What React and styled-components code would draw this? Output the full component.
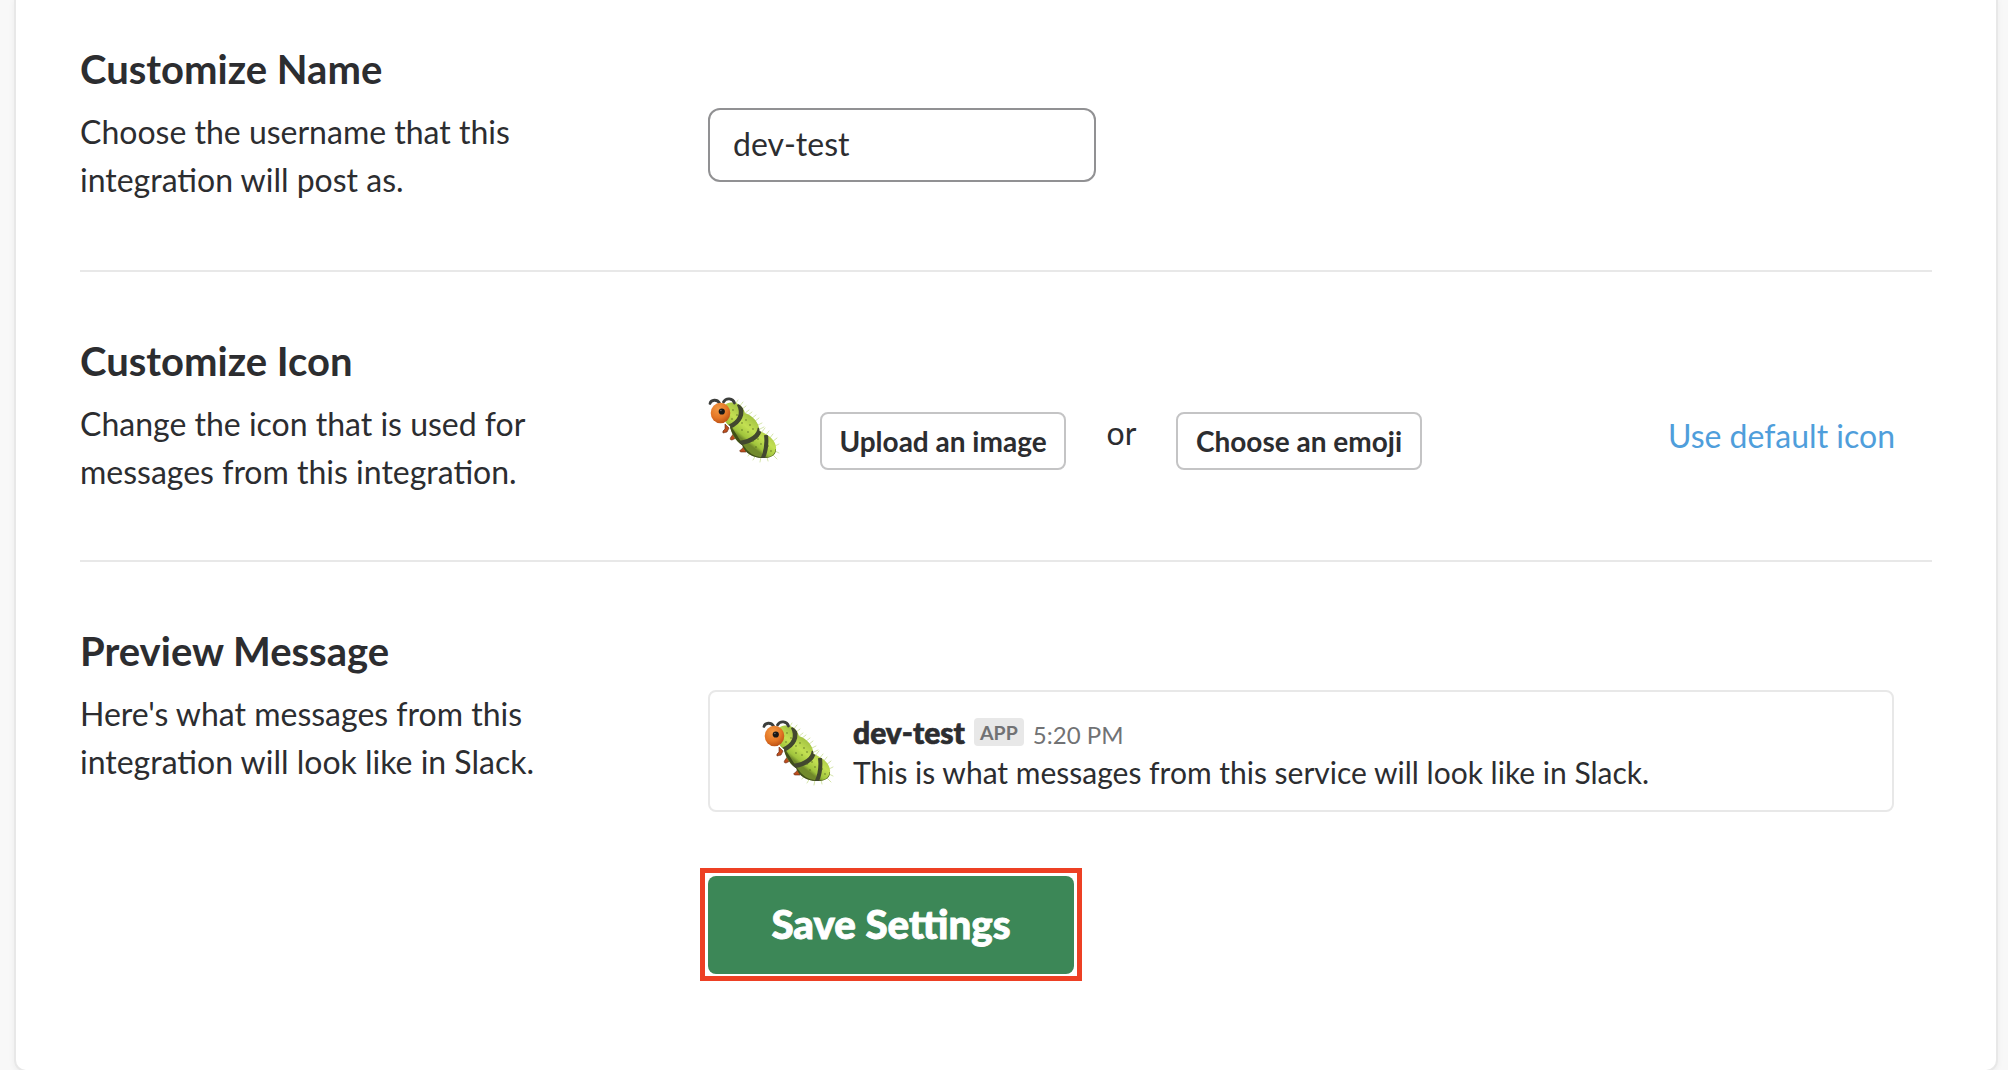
import React from "react";
import styled, { createGlobalStyle } from "styled-components";

const Global = createGlobalStyle`
  * { box-sizing: border-box; }
  body { margin: 0; background: #f8f8f8; font-family: Lato, sans-serif; color: #2c2d30; }
`;
const Page = styled.div`height: 1070px; overflow: hidden; padding: 0 12px 0 16px;`;
const Card = styled.main`
  height: 1070px; padding: 0 64px; background: #fff; border-radius: 0 0 10px 10px;
  box-shadow: 0 0 0 2px #e8e8e8, 0 2px 6px 2px rgba(0, 0, 0, 0.05);
`;
const Section = styled.section`
  display: flex; align-items: flex-start; height: ${(p) => p.$h}px; padding-top: ${(p) => p.$top}px;
  border-bottom: ${(p) => (p.$last ? "0" : "2px solid #e8e8e8")};
`;
const Intro = styled.div`width: 628px; flex: none;`;
const Title = styled.h2`margin: 0 0 14px; font-size: 40px; line-height: 50px; font-weight: 700;`;
const Text = styled.p`margin: 0; width: 480px; font-size: 32px; line-height: 48px;`;
const Controls = styled.div`display: flex; flex: 1; align-items: flex-start; padding: ${(p) => p.$top}px 38px 0 0;`;
const Input = styled.input`
  width: 388px; height: 74px; border: 2px solid #919193; border-radius: 12px; padding: 0 23px 4px;
  font: 400 32px Lato, sans-serif; color: #2c2d30; outline: 0;
`;
const Choices = styled.div`display: flex; align-items: flex-start; padding: 17px 0 0 40px;`;
const Button = styled.button`
  width: 246px; height: 58px; margin: 0; padding: 0; border: 2px solid #c4c4c5; border-radius: 8px;
  background: #fff; font: 700 28px Lato, sans-serif; color: #2c2d30; white-space: nowrap;
`;
const Or = styled.span`width: 110px; padding-left: 1px; text-align: center; font-size: 32px; line-height: 42px;`;
const Link = styled.a`margin: 16px -1px 0 auto; font-size: 32px; line-height: 50px; color: #4f9edb;`;
const Column = styled.div`flex: 1; padding: 64px 38px 0 0;`;
const Message = styled.div`
  display: flex; height: 122px; padding: 21px 0 0 52px; border: 2px solid #e8e8e8; border-radius: 8px;
`;
const Avatar = styled.div`padding-top: 5px;`;
const Body = styled.div`padding-left: 19px;`;
const Meta = styled.div`display: flex; align-items: baseline; height: 37px; line-height: 38px;`;
const Name = styled.span`font-size: 30px; font-weight: 900; -webkit-text-stroke: 0.7px currentColor;`;
const Badge = styled.span`
  align-self: flex-start; width: 50px; height: 28px; margin: 5px 9px 0; border-radius: 4px;
  background: #e8e8e8; color: #717274; font-size: 19.5px; line-height: 29px; font-weight: 700; text-align: center;
`;
const Time = styled.span`font-size: 24px; color: #717274;`;
const Line = styled.div`font-size: 30px; line-height: 44px; white-space: nowrap;`;
const Highlight = styled.div`width: 382px; height: 113px; margin: 56px 0 0 -8px; border: 5px solid #ed4024; padding: 3px;`;
const Save = styled.button`
  width: 366px; height: 98px; border: 0; border-radius: 8px; padding: 0 0 4px; background: #3c8757;
  color: #fff; font: 900 40.3px Lato, sans-serif; -webkit-text-stroke: 0.9px currentColor;
`;
const BugSvg = styled.svg`display: block; flex: none; width: 72px; height: 72px; overflow: visible;`;

const BODY = "M18 9 C27 5 35 10 37 18 C45 21 51 27 51.5 36 C59 39 67 44 68 52 C69 60 63 63.5 54 63 C45 63 37 58 34 50 C27 46 23 38 22 31 C15 28 12 14 18 9Z";
const SPINES = [
  [27, 10, 30, 5], [31, 12, 35, 7], [33, 15, 38, 11], [36, 19, 41, 15], [39, 21, 44, 17], [43, 24, 48, 20],
  [46, 27, 51, 23], [48, 31, 54, 28], [50, 35, 56, 32], [53, 38, 57, 33], [57, 41, 61, 36], [61, 44, 65, 39],
  [64, 47, 69, 43], [67, 51, 71, 49], [67, 56, 71, 58], [65, 60, 69, 64], [59, 62, 60, 66], [53, 62, 52, 67],
  [48, 60, 45, 65], [43, 57, 40, 61],
];
const DOTS = [[25, 15], [29, 20], [24, 24], [34, 28], [38, 25], [42, 30], [34, 35], [40, 37], [45, 34], [45, 46], [50, 44], [48, 52], [53, 49], [60, 51], [63, 56]];

function Bug({ id }) {
  const skin = `skin-${id}`;
  const face = `face-${id}`;
  const clip = `clip-${id}`;
  return (
    <BugSvg viewBox="0 0 72 72">
      <defs>
        <linearGradient id={skin} gradientUnits="userSpaceOnUse" x1="47" y1="25" x2="33" y2="43">
          <stop offset="0" stopColor="#a6c544" />
          <stop offset="0.45" stopColor="#c3e052" />
          <stop offset="0.85" stopColor="#a0c43c" />
          <stop offset="1" stopColor="#718a2b" />
        </linearGradient>
        <radialGradient id={face} cx="0.4" cy="0.3" r="0.75">
          <stop offset="0" stopColor="#f39a45" />
          <stop offset="0.6" stopColor="#e47625" />
          <stop offset="1" stopColor="#b84d14" />
        </radialGradient>
        <clipPath id={clip}><path d={BODY} /></clipPath>
      </defs>
      <g fill="#bd4d1d" stroke="#632a12" strokeWidth="0.6">
        <path d="M17 29 L21 33 L19 37 L15 38 Q14 36 17 34Z" />
        <path d="M26 38 L28 43 L24 45 Q21 45 23 42Z" />
        <path d="M36 51 L38 57 L33 57 Q30 56 34 54Z" />
      </g>
      <g stroke="#c3da86" strokeWidth="0.7" strokeLinecap="round">
        {SPINES.map(([a, b, c, d]) => <line key={`${a}-${b}`} x1={a} y1={b} x2={c} y2={d} />)}
      </g>
      <path d={BODY} fill={`url(#${skin})`} />
      <g clipPath={`url(#${clip})`} fill="none">
        <path d="M22 32 C27 40 31 46 34 51 C39 59 47 63.5 54 64 C62 65 69 61 69 54" stroke="#26300f" strokeWidth="3" opacity="0.65" />
        <g stroke="#42472f" strokeWidth="4.6">
          <path d="M31 9 C36 19 32 27 21 32" />
          <path d="M52 33 C51 41 44 46 32 48" />
          <path d="M58 40 C59 48 59 55 54 65" strokeWidth="4" />
        </g>
      </g>
      <g fill="#4f631d">
        {DOTS.map(([x, y]) => <circle key={`${x}-${y}`} cx={x} cy={y} r="0.65" />)}
      </g>
      <g fill="none" stroke="#3c3e3c" strokeWidth="2.8" strokeLinecap="round">
        <path d="M2 8.5 C3 4.5 9 4 11.5 8" />
        <path d="M15.5 7 C18 2.5 25 3 26.5 8" />
      </g>
      <ellipse cx="12.5" cy="18" rx="9.8" ry="10.3" fill={`url(#${face})`} />
      <circle cx="13.8" cy="16.5" r="3.1" fill="#171717" />
      <circle cx="12.9" cy="15.5" r="0.7" fill="#777" />
    </BugSvg>
  );
}

export default function App() {
  return (
    <>
      <Global />
      <Page>
        <Card>
          <Section $h={272} $top={44}>
            <Intro><Title>Customize Name</Title><Text>Choose the username that this integration will post as.</Text></Intro>
            <Controls $top={64}><Input defaultValue="dev-test" /></Controls>
          </Section>
          <Section $h={290} $top={64}>
            <Intro><Title>Customize Icon</Title><Text>Change the icon that is used for messages from this integration.</Text></Intro>
            <Controls $top={59}>
              <Bug id="icon" />
              <Choices>
                <Button>Upload an image</Button><Or>or</Or><Button>Choose an emoji</Button>
              </Choices>
              <Link>Use default icon</Link>
            </Controls>
          </Section>
          <Section $h={508} $top={64} $last>
            <Intro><Title>Preview Message</Title><Text>Here's what messages from this integration will look like in Slack.</Text></Intro>
            <Column>
              <Message>
                <Avatar><Bug id="avatar" /></Avatar>
                <Body>
                  <Meta><Name>dev-test</Name><Badge>APP</Badge><Time>5:20 PM</Time></Meta>
                  <Line>This is what messages from this service will look like in Slack.</Line>
                </Body>
              </Message>
              <Highlight><Save>Save Settings</Save></Highlight>
            </Column>
          </Section>
        </Card>
      </Page>
    </>
  );
}
